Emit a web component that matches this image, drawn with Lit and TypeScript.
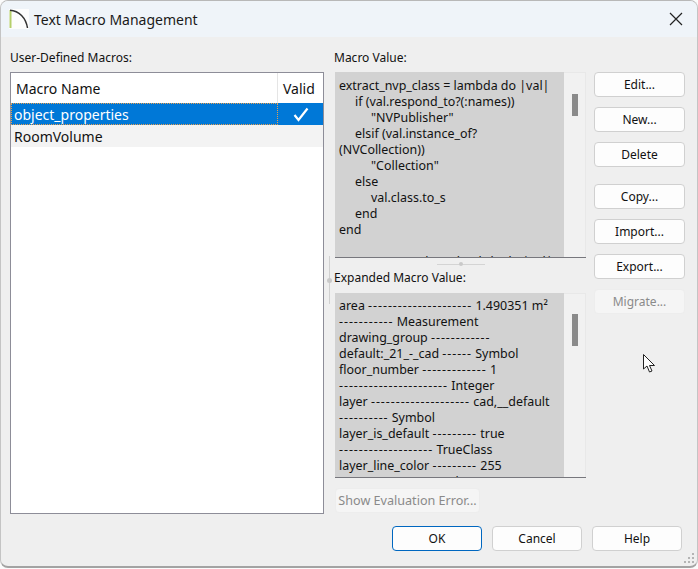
import { LitElement, html, css, svg } from "lit";
import { customElement } from "lit/decorators.js";

const macroLines = [
  ["", "extract_nvp_class = lambda do |val|"],
  ["i1", "if (val.respond_to?(:names))"],
  ["i2", "\"NVPublisher\""],
  ["i1", "elsif (val.instance_of?"],
  ["", "(NVCollection))"],
  ["i2", "\"Collection\""],
  ["i1", "else"],
  ["i2", "val.class.to_s"],
  ["i1", "end"],
  ["", "end"],
  ["", "\u00a0"],
  ["", "extract_nvp_value = lambda do |val|"],
];

const expandedLines = [
  "area --------------------- 1.490351 m\u00b2",
  "----------- Measurement",
  "drawing_group ------------",
  "default:_21_-_cad ------ Symbol",
  "floor_number ------------- 1",
  "---------------------- Integer",
  "layer -------------------- cad,__default",
  "---------- Symbol",
  "layer_is_default --------- true",
  "------------------- TrueClass",
  "layer_line_color --------- 255",
  "-------------------- Other",
];

@customElement("app-root")
export class AppRoot extends LitElement {
  static styles = css`
    :host {
      display: block;
      width: 698px;
      height: 569px;
      background: #fbfbfb;
      overflow: hidden;
      font-family: "Noto Sans", "Open Sans", sans-serif;
      font-size: 12px;
      color: #111;
    }
    .window {
      height: 568px;
      box-sizing: border-box;
      border-top: 1px solid #b8b8b8;
      border-left: 1px solid #c4c4c4;
      border-right: 1px solid #c4c4c4;
      border-bottom: 2px solid #a3a3a3;
      border-radius: 8px;
      background: #efefef;
      display: flex;
      flex-direction: column;
      position: relative;
      overflow: hidden;
    }
    .title {
      height: 36px;
      flex: none;
      background: #eff4f9;
      display: flex;
      align-items: center;
      padding: 0 14px 0 8px;
      gap: 5px;
      font-size: 14px;
      color: #1a1a1a;
    }
    .title span { flex: 1; }
    .body {
      flex: 1;
      display: grid;
      grid-template-columns: 314px 262px 99px;
      padding: 0 0 0 9px;
      position: relative;
    }
    .label {
      height: 35px;
      line-height: 41px;
      font-size: 12px;
      white-space: nowrap;
    }
    .list {
      height: 442px;
      box-sizing: border-box;
      border: 1px solid #8d8d98;
      background: #fff;
      font-size: 14px;
    }
    .lhead { display: flex; height: 30px; line-height: 31px; }
    .lhead .n { width: 267px; box-sizing: border-box; padding-left: 5px; border-right: 1px solid #e5e5e5; }
    .lhead .v { padding-left: 5px; }
    .row { height: 22px; line-height: 23px; display: flex; white-space: nowrap; }
    .row.sel { background: #0078d7; color: #fff; }
    .row.alt { background: #f3f3f3; }
    .row .n { width: 267px; box-sizing: border-box; padding-left: 3px; }
    .row.sel .n { outline: 1px dotted #e8a050; outline-offset: -1px; }
    .row .v { flex: 1; display: flex; align-items: center; justify-content: center; }
    .mid { margin-left: 11px; display: flex; flex-direction: column; position: relative; }
    .mid .label { margin-left: -1px; }
    .box {
      height: 186px;
      flex: none;
      display: flex;
      box-sizing: border-box;
      background: #f0f0f0;
      border-bottom: 1px solid #77777d;
      overflow: hidden;
    }
    .box.exp { height: 185px; }
    .text { width: 229px; flex: none; background: #d2d2d2; padding: 6px 0 0 4px; box-sizing: border-box; line-height: 16px; font-size: 12.45px; overflow: hidden; }
    .box.exp .text { padding-top: 5px; }
    .text div { white-space: nowrap; }
    .dash { letter-spacing: 0.95px; }
    .i1 { padding-left: 16px; }
    .i2 { padding-left: 32px; }
    .sb { flex: 1; position: relative; background: #f1f1f1; border-top: 1px solid #e8e8e8; border-right: 1px solid #e8e8e8; }
    .thumb { position: absolute; left: 8px; width: 6px; background: #8a8a8a; }
    .hgrip { height: 12px; flex: none; display: flex; justify-content: center; align-items: center; position: relative; }
    .hgrip i { display: block; width: 48px; height: 1px; background: #d4d4d4; }
    .hgrip b { position: absolute; width: 4px; height: 4px; border-radius: 50%; background: #c9c9c9; }
    .mid .label.sec { height: 23px; line-height: 15px; }
    .vgrip { position: absolute; left: -6px; top: 219px; width: 1px; height: 48px; background: #d0d0d0; }
    .vgrip b { position: absolute; left: -2px; top: 22px; width: 5px; height: 5px; border-radius: 50%; background: #c9c9c9; }
    .btn {
      box-sizing: border-box;
      height: 25px;
      border: 1px solid #d0d0d0;
      border-radius: 4px;
      background: #fdfdfd;
      display: flex;
      align-items: center;
      justify-content: center;
      font-size: 12px;
      color: #111;
      white-space: nowrap;
    }
    .btn.dis { background: #f5f5f5; border-color: #ededed; color: #8a8a8a; }
    .btn.def { border: 1px solid #0067c0; }
    .evalbtn { width: 145px; margin-top: 10px; font-size: 12.6px; }
    .side { margin-left: 8px; padding-top: 35px; display: flex; flex-direction: column; }
    .side .btn { margin-bottom: 10px; }
    .side .btn.gap { margin-top: 7px; }
    .foot {
      position: absolute;
      right: 15px;
      bottom: 15px;
      display: flex;
      gap: 10px;
    }
    .foot .btn { width: 90px; }
    .cursor { position: absolute; left: 642px; top: 317px; }
    .resize { position: absolute; right: 1px; bottom: 1px; }
  `;

  private dashes(t: string) {
    return t
      .split(/(-{2,})/)
      .map((p) => (p.startsWith("--") ? html`<span class="dash">${p}</span>` : p));
  }

  render() {
    return html`
      <div class="window">
        <div class="title">
          <svg width="20" height="20" viewBox="0 0 20 20">
            <rect x="0" y="0" width="20" height="20" fill="#fdfdfd"></rect>
            <rect x="0.5" y="1" width="2" height="18" fill="#b5cf6b"></rect>
            <path d="M1 1.2 C10 1.6 17 9 18.5 19" fill="none" stroke="#333" stroke-width="1.5"></path>
          </svg>
          <span>Text Macro Management</span>
          <svg width="14" height="14" viewBox="0 0 14 14">
            <path d="M1 1 L13 13 M13 1 L1 13" stroke="#222" stroke-width="1.2" fill="none"></path>
          </svg>
        </div>
        <div class="body">
          <div class="left">
            <div class="label">User-Defined Macros:</div>
            <div class="list">
              <div class="lhead"><div class="n">Macro Name</div><div class="v">Valid</div></div>
              <div class="row sel">
                <div class="n">object_properties</div>
                <div class="v">
                  <svg width="16" height="15" viewBox="0 0 16 15">
                    <path d="M1.5 8 L5.5 13 L14.5 1.5" fill="none" stroke="#fff" stroke-width="2.2"></path>
                  </svg>
                </div>
              </div>
              <div class="row alt"><div class="n">RoomVolume</div></div>
            </div>
          </div>
          <div class="mid">
            <div class="label">Macro Value:</div>
            <div class="box">
              <div class="text">
                ${macroLines.map(([c, t]) => html`<div class=${c}>${t}</div>`)}
              </div>
              <div class="sb"><div class="thumb" style="top:21px;height:22px"></div></div>
            </div>
            <div class="hgrip"><i></i><b></b></div>
            <div class="label sec">Expanded Macro Value:</div>
            <div class="box exp">
              <div class="text">
                ${expandedLines.map((t) => html`<div>${this.dashes(t)}</div>`)}
              </div>
              <div class="sb"><div class="thumb" style="top:20px;height:32px"></div></div>
            </div>
            <div class="btn dis evalbtn">Show Evaluation Error...</div>
            <div class="vgrip"><b></b></div>
          </div>
          <div class="side">
            <div class="btn">Edit...</div>
            <div class="btn">New...</div>
            <div class="btn">Delete</div>
            <div class="btn gap">Copy...</div>
            <div class="btn">Import...</div>
            <div class="btn">Export...</div>
            <div class="btn dis">Migrate...</div>
          </div>
          <div class="foot">
            <div class="btn def">OK</div>
            <div class="btn">Cancel</div>
            <div class="btn">Help</div>
          </div>
          <svg class="cursor" width="13" height="20" viewBox="0 0 13 20">
            ${svg`<path d="M0.5 0.5 V15 L4 12 L6.5 18 L9 17 L6.5 11.5 H11.5 Z" fill="#fff" stroke="#222" stroke-width="1"></path>`}
          </svg>
        </div>
        <svg class="resize" width="12" height="12" viewBox="0 0 12 12" fill="#b4b4b4">
          <rect x="8" y="0" width="2" height="2"></rect>
          <rect x="4" y="4" width="2" height="2"></rect>
          <rect x="8" y="4" width="2" height="2"></rect>
          <rect x="0" y="8" width="2" height="2"></rect>
          <rect x="4" y="8" width="2" height="2"></rect>
          <rect x="8" y="8" width="2" height="2"></rect>
        </svg>
      </div>
    `;
  }
}
